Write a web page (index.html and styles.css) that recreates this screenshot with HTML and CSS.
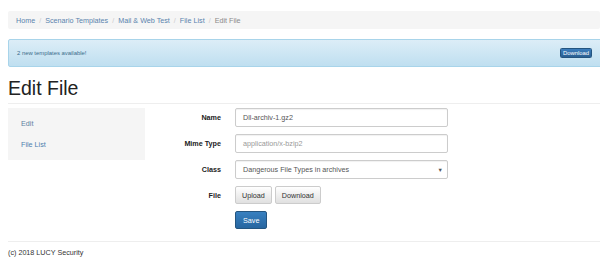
FILE: index.html
```html
<!DOCTYPE html>
<html>
<head>
<meta charset="utf-8">
<link rel="stylesheet" href="styles.css">
</head>
<body>
<div class="page">
  <div class="breadcrumb">
    <a class="crumb">Home</a><span class="sep">/</span>
    <a class="crumb">Scenario Templates</a><span class="sep">/</span>
    <a class="crumb">Mail &amp; Web Test</a><span class="sep">/</span>
    <a class="crumb">File List</a><span class="sep">/</span>
    <span class="crumb active">Edit File</span>
  </div>
  <div class="alert">
    <span class="alert-text">2 new templates available!</span>
    <span class="btn-mini">Download</span>
  </div>
  <h1 class="title">Edit File</h1>
  <div class="rule"></div>
  <div class="main">
    <div class="sidebar">
      <a class="side-link active">Edit</a>
      <a class="side-link">File List</a>
    </div>
    <div class="form">
      <div class="label">Name</div>
      <div class="input">Dll-archiv-1.gz2</div>
      <div class="label">Mime Type</div>
      <div class="input placeholder">application/x-bzip2</div>
      <div class="label">Class</div>
      <div class="input select"><span>Dangerous File Types in archives</span><span class="caret">&#9660;</span></div>
      <div class="label">File</div>
      <div class="btns"><span class="btn">Upload</span><span class="btn">Download</span></div>
      <div></div>
      <div class="btns"><span class="btn primary">Save</span></div>
    </div>
  </div>
  <div class="footer">(c) 2018 LUCY Security</div>
</div>
</body>
</html>
```
FILE: styles.css
```css
* { box-sizing: border-box; }
html, body { margin: 0; padding: 0; background: #fff; }
body { font-family: "Liberation Sans", Arial, sans-serif; font-size: 7.2px; color: #333; }
.page { padding: 11px 0 0 8px; width: 600px; overflow: hidden; }
.breadcrumb {
  height: 18px; background: #f5f5f5; border-radius: 2px;
  display: flex; align-items: center; padding: 0 8px;
}
.crumb { color: #5a83ad; }
.crumb.active { color: #8a8a8a; }
.sep { color: #ccc; padding: 0 4px; }
.alert {
  margin-top: 10px; height: 28px; width: 600px;
  border: 1px solid #a8d4ea; border-radius: 2px;
  background: linear-gradient(#dcedf7, #bfdff0);
  display: flex; align-items: center; justify-content: space-between;
  padding: 0 15px 0 8px;
}
.alert-text { font-size: 5.9px; color: #3c6d8c; }
.btn-mini {
  font-size: 5.9px; color: #fff; height: 10px; width: 32px; line-height: 9px;
  text-align: center; border-radius: 1.5px; border: 1px solid #245580;
  background: linear-gradient(#3b7dbd, #2a5f92);
}
.title { margin: 0; padding-top: 9px; font-size: 19.5px; font-weight: normal; line-height: 24px; color: #222; height: 36px; }
.rule { border-top: 1px solid #eee; }
.main { display: flex; margin-top: 4px; }
.sidebar {
  width: 137px; height: 52px; background: #f5f5f5;
  display: flex; flex-direction: column; padding: 12px 13px 0; gap: 13px;
}
.side-link { color: #4f7fae; line-height: 8px; }
.side-link.active { color: #5f7f9f; }
.form {
  display: grid; grid-template-columns: 76px 213px; column-gap: 14px; row-gap: 7px;
  align-items: center;
}
.label { text-align: right; font-weight: bold; color: #222; }
.input {
  height: 19px; border: 1px solid #ccc; border-radius: 2px; padding: 0 7px;
  display: flex; align-items: center; color: #555; background: #fff;
  box-shadow: inset 0 1px 1px rgba(0,0,0,.06);
}
.input.placeholder { color: #999; }
.input.select { justify-content: space-between; padding-right: 4px; }
.caret { font-size: 5.5px; color: #555; }
.btns { display: flex; gap: 3px; }
.btn {
  height: 18px; padding: 0 6px; border: 1px solid #ccc; border-radius: 2px;
  display: flex; align-items: center; color: #333;
  background: linear-gradient(#fff, #e0e0e0);
}
.btn.primary { color: #fff; border-color: #245580; background: linear-gradient(#3880c0, #2766a0); padding: 0 7px; }
.footer { margin-top: 12px; border-top: 1px solid #eee; padding-top: 6px; color: #333; }
```
